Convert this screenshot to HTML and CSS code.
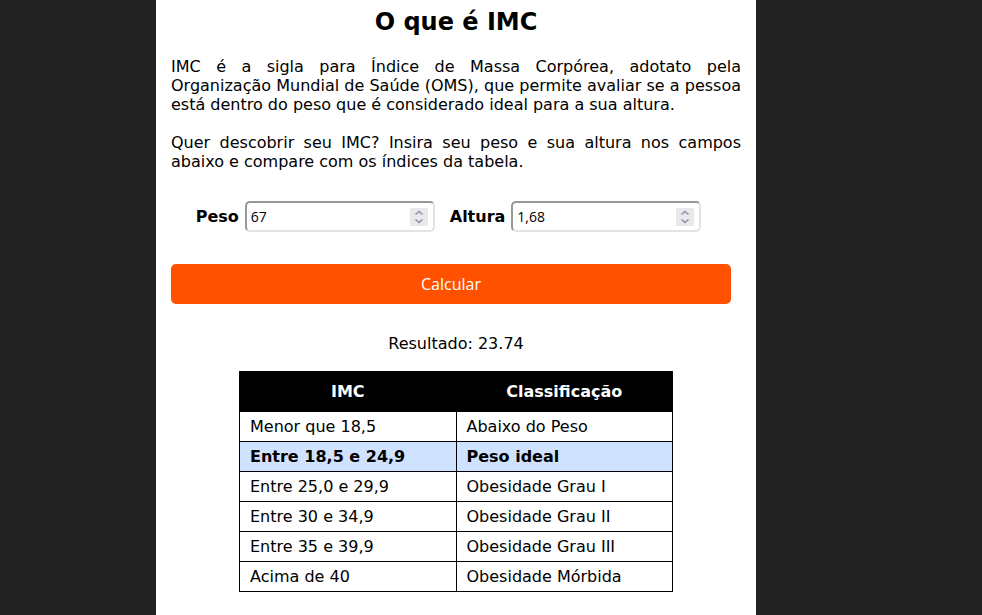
FILE: index.html
```html
<!DOCTYPE html>
<html lang="pt-BR">
<head>
  <meta charset="utf-8">
  <meta name="viewport" content="width=device-width, initial-scale=1">
  <title>O que é IMC</title>
  <link rel="stylesheet" href="styles.css">
</head>
<body>
  <main class="container">
    <h1 class="title">O que é IMC</h1>
    <p class="text">IMC é a sigla para Índice de Massa Corpórea, adotato pela Organização Mundial de Saúde (OMS), que permite avaliar se a pessoa está dentro do peso que é considerado ideal para a sua altura.</p>
    <p class="text">Quer descobrir seu IMC? Insira seu peso e sua altura nos campos abaixo e compare com os índices da tabela.</p>

    <form class="form">
      <div class="fields">
        <div class="field">
          <label for="peso">Peso</label>
          <div class="control">
            <input id="peso" type="text" inputmode="decimal" value="67">
            <svg class="spinner" viewBox="0 0 18 18" aria-hidden="true"><path d="M5.5 6.5 9 3.5l3.5 3M5.5 11.5l3.5 3 3.5-3"/></svg>
          </div>
        </div>
        <div class="field">
          <label for="altura">Altura</label>
          <div class="control">
            <input id="altura" type="text" inputmode="decimal" value="1,68">
            <svg class="spinner" viewBox="0 0 18 18" aria-hidden="true"><path d="M5.5 6.5 9 3.5l3.5 3M5.5 11.5l3.5 3 3.5-3"/></svg>
          </div>
        </div>
      </div>
      <button class="submit" type="button">Calcular</button>
    </form>

    <p class="result">Resultado: 23.74</p>

    <table class="table">
      <thead>
        <tr><th>IMC</th><th>Classificação</th></tr>
      </thead>
      <tbody>
        <tr><td>Menor que 18,5</td><td>Abaixo do Peso</td></tr>
        <tr class="active"><td>Entre 18,5 e 24,9</td><td>Peso ideal</td></tr>
        <tr><td>Entre 25,0 e 29,9</td><td>Obesidade Grau I</td></tr>
        <tr><td>Entre 30 e 34,9</td><td>Obesidade Grau II</td></tr>
        <tr><td>Entre 35 e 39,9</td><td>Obesidade Grau III</td></tr>
        <tr><td>Acima de 40</td><td>Obesidade Mórbida</td></tr>
      </tbody>
    </table>
  </main>
</body>
</html>
```
FILE: styles.css
```css
* {
  box-sizing: border-box;
}

body {
  margin: 0;
  padding-right: 70px;
  background: #222;
  color: #000;
  font: 16px/19px "DejaVu Sans", sans-serif;
}

.container {
  max-width: 600px;
  min-height: 100vh;
  margin: 0 auto;
  padding: 8px 15px 23px;
  background: #fff;
}

.title {
  margin: 0 0 21px;
  font-size: 24px;
  line-height: 28px;
  text-align: center;
}

.text {
  margin: 0 0 19px;
  text-align: justify;
}

.form {
  margin: 30px 0;
}

.fields {
  display: flex;
  flex-wrap: wrap;
  justify-content: center;
  margin-bottom: 32px;
}

.field {
  display: flex;
  align-items: center;
  gap: 6px;
  margin-right: 15px;
  font-weight: bold;
}

.control {
  position: relative;
}

.control input {
  display: block;
  width: 190px;
  height: 31px;
  padding: 1px 24px 1px 4px;
  border: 2px solid #e3e3e3;
  border-top-color: #979797;
  border-left-color: #979797;
  border-radius: 5px;
  background: #fff;
  color: #000;
  font: 370 14px "Open Sans", sans-serif;
}

.spinner {
  position: absolute;
  top: 7px;
  right: 7px;
  width: 18px;
  height: 18px;
  background: #e9e9ed;
  fill: none;
  stroke: #8f8f9d;
  stroke-width: 1.5;
  pointer-events: none;
}

.submit {
  display: block;
  width: calc(100% - 10px);
  height: 40px;
  padding: 0;
  border: 0;
  border-radius: 5px;
  background: #ff5100;
  color: #fff;
  font: 370 16px "Open Sans", sans-serif;
}

.result {
  margin: 0 0 18px;
  text-align: center;
}

.table {
  width: 434px;
  max-width: 100%;
  margin: 0 auto;
  border-collapse: collapse;
  table-layout: fixed;
}

.table th,
.table td {
  padding: 5px 10px;
  border: 1px solid #000;
  text-align: left;
}

.table th {
  padding: 10px;
  background: #000;
  color: #fff;
  text-align: center;
}

.active {
  background: #cfe2ff;
  font-weight: bold;
}
```
